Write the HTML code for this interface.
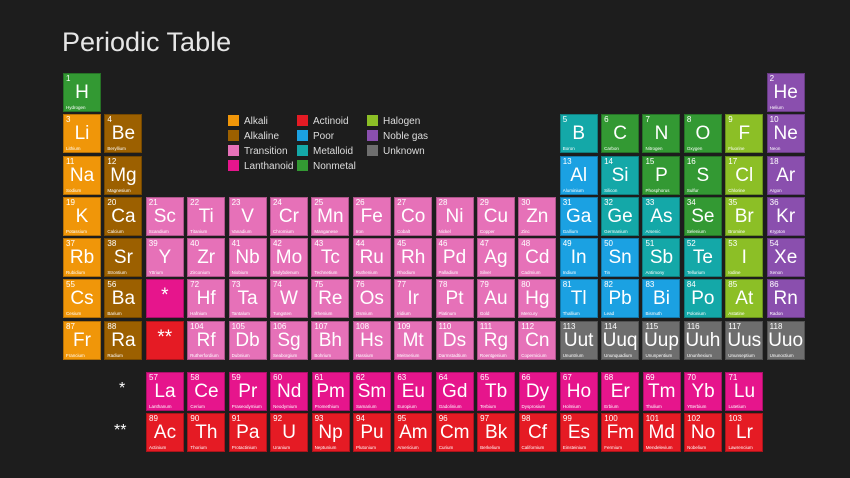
<!DOCTYPE html><html><head><meta charset="utf-8"><style>
body{margin:0;width:850px;height:478px;background:#1d1d1d;overflow:hidden;font-family:"Liberation Sans",sans-serif;color:#fff;position:relative}
h1{position:absolute;left:62px;top:27px;margin:0;font-weight:normal;font-size:27px;color:#e6e6e6;letter-spacing:0}
.g{position:absolute;left:63px;display:grid;grid-template-columns:repeat(18,38px);column-gap:3.4px;grid-auto-rows:39px;row-gap:2.3px}
.c{position:relative;box-sizing:border-box;border:1px solid rgba(0,0,0,.25);overflow:hidden}
.c span{position:absolute;left:2px;top:1px;font-size:8px;line-height:8px}
.c b{position:absolute;left:0;right:0;top:9px;text-align:center;font-weight:normal;font-size:19px;line-height:20px}
.c i{position:absolute;left:2px;bottom:1px;font-style:normal;font-size:4.5px;line-height:5px;white-space:nowrap}
.r4{grid-row:4}.r5{grid-row:5}.r6{grid-row:6}.r7{grid-row:7}.k1{grid-row:1}.k2{grid-row:2}
.a{background:#f09609}.e{background:#9c6000}.t{background:#e671b8}.l{background:#e6158c}.x{background:#e51b24}.p{background:#1ba1e2}.m{background:#14a8a8}.n{background:#339933}.h{background:#8cbf26}.o{background:#8a4fae}.u{background:#6e6e6e}
.lg{position:absolute;font-size:10px;color:#ddd;line-height:12px}
.lg s{display:inline-block;width:11px;height:11px;vertical-align:-2px;margin-right:5px;text-decoration:none}
.st{position:absolute;font-size:16px;color:#fff}
</style></head><body>
<h1>Periodic Table</h1>
<div class="lg" style="left:228px;top:115px"><s class="a"></s>Alkali<br><s class="e" style="margin-top:2px"></s>Alkaline<br><s class="t" style="margin-top:2px"></s>Transition<br><s class="l" style="margin-top:2px"></s>Lanthanoid</div>
<div class="lg" style="left:297px;top:115px"><s class="x"></s>Actinoid<br><s class="p" style="margin-top:2px"></s>Poor<br><s class="m" style="margin-top:2px"></s>Metalloid<br><s class="n" style="margin-top:2px"></s>Nonmetal</div>
<div class="lg" style="left:367px;top:115px"><s class="h"></s>Halogen<br><s class="o" style="margin-top:2px"></s>Noble gas<br><s class="u" style="margin-top:2px"></s>Unknown</div>
<div class="g" style="top:73px">
<div class="c n" style="grid-area:1/1"><span>1</span><b>H</b><i>Hydrogen</i></div>
<div class="c o" style="grid-area:1/18"><span>2</span><b>He</b><i>Helium</i></div>
<div class="c a" style="grid-area:2/1"><span>3</span><b>Li</b><i>Lithium</i></div>
<div class="c e" style="grid-area:2/2"><span>4</span><b>Be</b><i>Beryllium</i></div>
<div class="c m" style="grid-area:2/13"><span>5</span><b>B</b><i>Boron</i></div>
<div class="c n" style="grid-area:2/14"><span>6</span><b>C</b><i>Carbon</i></div>
<div class="c n" style="grid-area:2/15"><span>7</span><b>N</b><i>Nitrogen</i></div>
<div class="c n" style="grid-area:2/16"><span>8</span><b>O</b><i>Oxygen</i></div>
<div class="c h" style="grid-area:2/17"><span>9</span><b>F</b><i>Fluorine</i></div>
<div class="c o" style="grid-area:2/18"><span>10</span><b>Ne</b><i>Neon</i></div>
<div class="c a" style="grid-area:3/1"><span>11</span><b>Na</b><i>Sodium</i></div>
<div class="c e" style="grid-area:3/2"><span>12</span><b>Mg</b><i>Magnesium</i></div>
<div class="c p" style="grid-area:3/13"><span>13</span><b>Al</b><i>Aluminium</i></div>
<div class="c m" style="grid-area:3/14"><span>14</span><b>Si</b><i>Silicon</i></div>
<div class="c n" style="grid-area:3/15"><span>15</span><b>P</b><i>Phosphorus</i></div>
<div class="c n" style="grid-area:3/16"><span>16</span><b>S</b><i>Sulfur</i></div>
<div class="c h" style="grid-area:3/17"><span>17</span><b>Cl</b><i>Chlorine</i></div>
<div class="c o" style="grid-area:3/18"><span>18</span><b>Ar</b><i>Argon</i></div>
<div class="c a r4"><span>19</span><b>K</b><i>Potassium</i></div>
<div class="c e r4"><span>20</span><b>Ca</b><i>Calcium</i></div>
<div class="c t r4"><span>21</span><b>Sc</b><i>Scandium</i></div>
<div class="c t r4"><span>22</span><b>Ti</b><i>Titanium</i></div>
<div class="c t r4"><span>23</span><b>V</b><i>Vanadium</i></div>
<div class="c t r4"><span>24</span><b>Cr</b><i>Chromium</i></div>
<div class="c t r4"><span>25</span><b>Mn</b><i>Manganese</i></div>
<div class="c t r4"><span>26</span><b>Fe</b><i>Iron</i></div>
<div class="c t r4"><span>27</span><b>Co</b><i>Cobalt</i></div>
<div class="c t r4"><span>28</span><b>Ni</b><i>Nickel</i></div>
<div class="c t r4"><span>29</span><b>Cu</b><i>Copper</i></div>
<div class="c t r4"><span>30</span><b>Zn</b><i>Zinc</i></div>
<div class="c p r4"><span>31</span><b>Ga</b><i>Gallium</i></div>
<div class="c m r4"><span>32</span><b>Ge</b><i>Germanium</i></div>
<div class="c m r4"><span>33</span><b>As</b><i>Arsenic</i></div>
<div class="c n r4"><span>34</span><b>Se</b><i>Selenium</i></div>
<div class="c h r4"><span>35</span><b>Br</b><i>Bromine</i></div>
<div class="c o r4"><span>36</span><b>Kr</b><i>Krypton</i></div>
<div class="c a r5"><span>37</span><b>Rb</b><i>Rubidium</i></div>
<div class="c e r5"><span>38</span><b>Sr</b><i>Strontium</i></div>
<div class="c t r5"><span>39</span><b>Y</b><i>Yttrium</i></div>
<div class="c t r5"><span>40</span><b>Zr</b><i>Zirconium</i></div>
<div class="c t r5"><span>41</span><b>Nb</b><i>Niobium</i></div>
<div class="c t r5"><span>42</span><b>Mo</b><i>Molybdenum</i></div>
<div class="c t r5"><span>43</span><b>Tc</b><i>Technetium</i></div>
<div class="c t r5"><span>44</span><b>Ru</b><i>Ruthenium</i></div>
<div class="c t r5"><span>45</span><b>Rh</b><i>Rhodium</i></div>
<div class="c t r5"><span>46</span><b>Pd</b><i>Palladium</i></div>
<div class="c t r5"><span>47</span><b>Ag</b><i>Silver</i></div>
<div class="c t r5"><span>48</span><b>Cd</b><i>Cadmium</i></div>
<div class="c p r5"><span>49</span><b>In</b><i>Indium</i></div>
<div class="c p r5"><span>50</span><b>Sn</b><i>Tin</i></div>
<div class="c m r5"><span>51</span><b>Sb</b><i>Antimony</i></div>
<div class="c m r5"><span>52</span><b>Te</b><i>Tellurium</i></div>
<div class="c h r5"><span>53</span><b>I</b><i>Iodine</i></div>
<div class="c o r5"><span>54</span><b>Xe</b><i>Xenon</i></div>
<div class="c a r6"><span>55</span><b>Cs</b><i>Cesium</i></div>
<div class="c e r6"><span>56</span><b>Ba</b><i>Barium</i></div>
<div class="c l r6"><b style="top:6px">*</b></div>
<div class="c t r6"><span>72</span><b>Hf</b><i>Hafnium</i></div>
<div class="c t r6"><span>73</span><b>Ta</b><i>Tantalum</i></div>
<div class="c t r6"><span>74</span><b>W</b><i>Tungsten</i></div>
<div class="c t r6"><span>75</span><b>Re</b><i>Rhenium</i></div>
<div class="c t r6"><span>76</span><b>Os</b><i>Osmium</i></div>
<div class="c t r6"><span>77</span><b>Ir</b><i>Iridium</i></div>
<div class="c t r6"><span>78</span><b>Pt</b><i>Platinum</i></div>
<div class="c t r6"><span>79</span><b>Au</b><i>Gold</i></div>
<div class="c t r6"><span>80</span><b>Hg</b><i>Mercury</i></div>
<div class="c p r6"><span>81</span><b>Tl</b><i>Thallium</i></div>
<div class="c p r6"><span>82</span><b>Pb</b><i>Lead</i></div>
<div class="c p r6"><span>83</span><b>Bi</b><i>Bismuth</i></div>
<div class="c m r6"><span>84</span><b>Po</b><i>Polonium</i></div>
<div class="c h r6"><span>85</span><b>At</b><i>Astatine</i></div>
<div class="c o r6"><span>86</span><b>Rn</b><i>Radon</i></div>
<div class="c a r7"><span>87</span><b>Fr</b><i>Francium</i></div>
<div class="c e r7"><span>88</span><b>Ra</b><i>Radium</i></div>
<div class="c x r7"><b style="top:6px">**</b></div>
<div class="c t r7"><span>104</span><b>Rf</b><i>Rutherfordium</i></div>
<div class="c t r7"><span>105</span><b>Db</b><i>Dubnium</i></div>
<div class="c t r7"><span>106</span><b>Sg</b><i>Seaborgium</i></div>
<div class="c t r7"><span>107</span><b>Bh</b><i>Bohrium</i></div>
<div class="c t r7"><span>108</span><b>Hs</b><i>Hassium</i></div>
<div class="c t r7"><span>109</span><b>Mt</b><i>Meitnerium</i></div>
<div class="c t r7"><span>110</span><b>Ds</b><i>Darmstadtium</i></div>
<div class="c t r7"><span>111</span><b>Rg</b><i>Roentgenium</i></div>
<div class="c t r7"><span>112</span><b>Cn</b><i>Copernicium</i></div>
<div class="c u r7"><span>113</span><b>Uut</b><i>Ununtrium</i></div>
<div class="c u r7"><span>114</span><b>Uuq</b><i>Ununquadium</i></div>
<div class="c u r7"><span>115</span><b>Uup</b><i>Ununpentium</i></div>
<div class="c u r7"><span>116</span><b>Uuh</b><i>Ununhexium</i></div>
<div class="c u r7"><span>117</span><b>Uus</b><i>Ununseptium</i></div>
<div class="c u r7"><span>118</span><b>Uuo</b><i>Ununoctium</i></div>
</div>
<div class="st" style="left:119px;top:380px">*</div>
<div class="st" style="left:114px;top:422px">**</div>
<div class="g" style="top:372px;left:146px;grid-template-columns:repeat(15,38px)">
<div class="c l k1"><span>57</span><b>La</b><i>Lanthanum</i></div>
<div class="c l k1"><span>58</span><b>Ce</b><i>Cerium</i></div>
<div class="c l k1"><span>59</span><b>Pr</b><i>Praseodymium</i></div>
<div class="c l k1"><span>60</span><b>Nd</b><i>Neodymium</i></div>
<div class="c l k1"><span>61</span><b>Pm</b><i>Promethium</i></div>
<div class="c l k1"><span>62</span><b>Sm</b><i>Samarium</i></div>
<div class="c l k1"><span>63</span><b>Eu</b><i>Europium</i></div>
<div class="c l k1"><span>64</span><b>Gd</b><i>Gadolinium</i></div>
<div class="c l k1"><span>65</span><b>Tb</b><i>Terbium</i></div>
<div class="c l k1"><span>66</span><b>Dy</b><i>Dysprosium</i></div>
<div class="c l k1"><span>67</span><b>Ho</b><i>Holmium</i></div>
<div class="c l k1"><span>68</span><b>Er</b><i>Erbium</i></div>
<div class="c l k1"><span>69</span><b>Tm</b><i>Thulium</i></div>
<div class="c l k1"><span>70</span><b>Yb</b><i>Ytterbium</i></div>
<div class="c l k1"><span>71</span><b>Lu</b><i>Lutetium</i></div>
<div class="c x k2"><span>89</span><b>Ac</b><i>Actinium</i></div>
<div class="c x k2"><span>90</span><b>Th</b><i>Thorium</i></div>
<div class="c x k2"><span>91</span><b>Pa</b><i>Protactinium</i></div>
<div class="c x k2"><span>92</span><b>U</b><i>Uranium</i></div>
<div class="c x k2"><span>93</span><b>Np</b><i>Neptunium</i></div>
<div class="c x k2"><span>94</span><b>Pu</b><i>Plutonium</i></div>
<div class="c x k2"><span>95</span><b>Am</b><i>Americium</i></div>
<div class="c x k2"><span>96</span><b>Cm</b><i>Curium</i></div>
<div class="c x k2"><span>97</span><b>Bk</b><i>Berkelium</i></div>
<div class="c x k2"><span>98</span><b>Cf</b><i>Californium</i></div>
<div class="c x k2"><span>99</span><b>Es</b><i>Einsteinium</i></div>
<div class="c x k2"><span>100</span><b>Fm</b><i>Fermium</i></div>
<div class="c x k2"><span>101</span><b>Md</b><i>Mendelevium</i></div>
<div class="c x k2"><span>102</span><b>No</b><i>Nobelium</i></div>
<div class="c x k2"><span>103</span><b>Lr</b><i>Lawrencium</i></div>
</div>
</body></html>
